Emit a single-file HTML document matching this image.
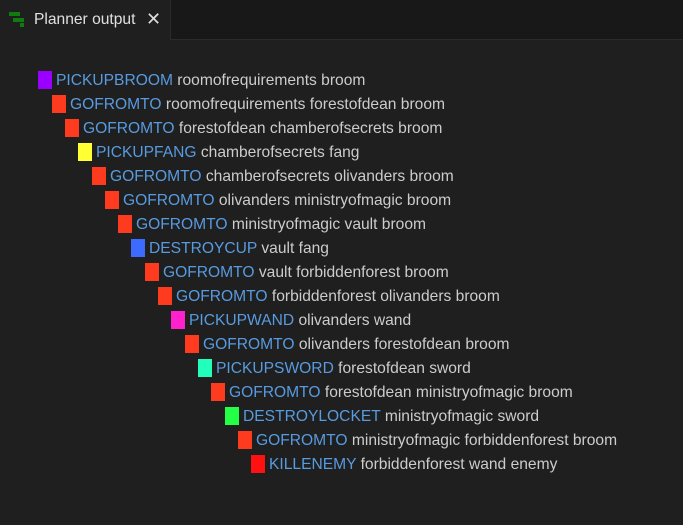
<!DOCTYPE html>
<html><head><style>
body{margin:0;width:683px;height:525px;background:#1f1f1f;overflow:hidden;font-family:"Liberation Sans",sans-serif;position:relative}
.hdr{position:absolute;left:170px;top:0;width:513px;height:40px;background:#181818;border-left:1px solid #2b2b2b;border-bottom:1px solid #2b2b2b;box-sizing:border-box}
.tab{position:absolute;left:34px;top:11px;color:#e0e0e0;font-size:15.6px}
.x{position:absolute;left:146px;top:9px;color:#ddd;font-size:18px}
.row{position:absolute;height:18px;font-size:15.6px;line-height:20px;color:#cccccc;white-space:nowrap}
.sq{display:inline-block;width:14px;height:18px;vertical-align:top;margin-right:4px}
.k{color:#589be0}
</style></head><body>
<div class="hdr"></div>
<svg style="position:absolute;left:0;top:0" width="30" height="30"><rect x="9" y="12" width="11" height="4" fill="#107c10"/><rect x="13" y="18" width="11" height="4" fill="#107c10"/><rect x="20" y="23" width="4" height="4" fill="#107c10"/></svg>
<div class="tab">Planner output</div>
<div class="x">✕</div>
<div class="row" style="left:38px;top:71px"><span class="sq" style="background:#9900ff"></span><span class="k">PICKUPBROOM</span> roomofrequirements broom</div>
<div class="row" style="left:52px;top:95px"><span class="sq" style="background:#ff3b1f"></span><span class="k">GOFROMTO</span> roomofrequirements forestofdean broom</div>
<div class="row" style="left:65px;top:119px"><span class="sq" style="background:#ff3b1f"></span><span class="k">GOFROMTO</span> forestofdean chamberofsecrets broom</div>
<div class="row" style="left:78px;top:143px"><span class="sq" style="background:#ffff33"></span><span class="k">PICKUPFANG</span> chamberofsecrets fang</div>
<div class="row" style="left:92px;top:167px"><span class="sq" style="background:#ff3b1f"></span><span class="k">GOFROMTO</span> chamberofsecrets olivanders broom</div>
<div class="row" style="left:105px;top:191px"><span class="sq" style="background:#ff3b1f"></span><span class="k">GOFROMTO</span> olivanders ministryofmagic broom</div>
<div class="row" style="left:118px;top:215px"><span class="sq" style="background:#ff3b1f"></span><span class="k">GOFROMTO</span> ministryofmagic vault broom</div>
<div class="row" style="left:131px;top:239px"><span class="sq" style="background:#3d6bff"></span><span class="k">DESTROYCUP</span> vault fang</div>
<div class="row" style="left:145px;top:263px"><span class="sq" style="background:#ff3b1f"></span><span class="k">GOFROMTO</span> vault forbiddenforest broom</div>
<div class="row" style="left:158px;top:287px"><span class="sq" style="background:#ff3b1f"></span><span class="k">GOFROMTO</span> forbiddenforest olivanders broom</div>
<div class="row" style="left:171px;top:311px"><span class="sq" style="background:#ff22cc"></span><span class="k">PICKUPWAND</span> olivanders wand</div>
<div class="row" style="left:185px;top:335px"><span class="sq" style="background:#ff3b1f"></span><span class="k">GOFROMTO</span> olivanders forestofdean broom</div>
<div class="row" style="left:198px;top:359px"><span class="sq" style="background:#22ffbb"></span><span class="k">PICKUPSWORD</span> forestofdean sword</div>
<div class="row" style="left:211px;top:383px"><span class="sq" style="background:#ff3b1f"></span><span class="k">GOFROMTO</span> forestofdean ministryofmagic broom</div>
<div class="row" style="left:225px;top:407px"><span class="sq" style="background:#22ff44"></span><span class="k">DESTROYLOCKET</span> ministryofmagic sword</div>
<div class="row" style="left:238px;top:431px"><span class="sq" style="background:#ff3b1f"></span><span class="k">GOFROMTO</span> ministryofmagic forbiddenforest broom</div>
<div class="row" style="left:251px;top:455px"><span class="sq" style="background:#ff1111"></span><span class="k">KILLENEMY</span> forbiddenforest wand enemy</div>
</body></html>
